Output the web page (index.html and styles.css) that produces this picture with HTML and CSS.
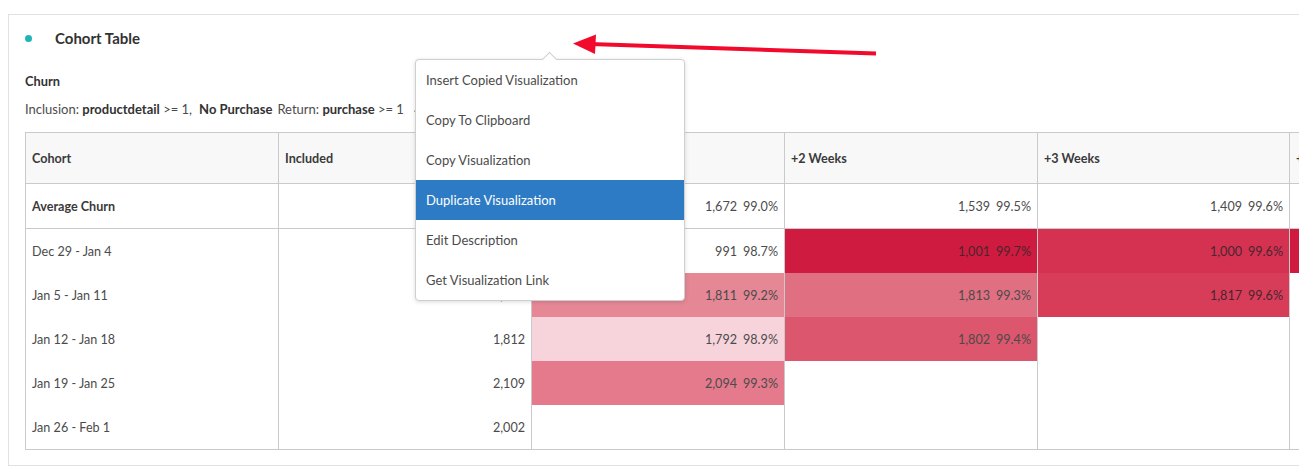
FILE: index.html
```html
<!DOCTYPE html>
<html lang="en">
<head>
<meta charset="utf-8">
<title>Cohort Table</title>
<link rel="stylesheet" href="styles.css">
</head>
<body>
<div class="page">
  <section class="card">
    <header class="card-head">
      <span class="dot"></span>
      <h1 class="card-title">Cohort Table</h1>
    </header>
    <div class="metric">Churn</div>
    <div class="criteria">
      <span>Inclusion: <b>productdetail</b> &gt;= 1,</span>
      <b class="np">No Purchase</b>
      <span>Return: <b>purchase</b> &gt;= 1</span>
      <svg class="pencil" width="8" height="8" viewBox="0 0 8 8"><path d="M1 7 L1.5 5.5 L5.5 1.5 L6.5 2.5 L2.5 6.5 Z" fill="#8a8a8a"/></svg>
    </div>

    <div class="grid">
      <div class="c hd">Cohort</div>
      <div class="c hd">Included</div>
      <div class="c hd">+1 Week</div>
      <div class="c hd">+2 Weeks</div>
      <div class="c hd">+3 Weeks</div>
      <div class="c hd">+4 Weeks</div>

      <div class="c avg lbl">Average Churn</div>
      <div class="c avg num"></div>
      <div class="c avg num"><span>1,672</span><span>99.0%</span></div>
      <div class="c avg num"><span>1,539</span><span>99.5%</span></div>
      <div class="c avg num"><span>1,409</span><span>99.6%</span></div>
      <div class="c avg num"></div>

      <div class="c">Dec 29 - Jan 4</div>
      <div class="c num"><span>991</span></div>
      <div class="c num"><span>991</span><span>98.7%</span></div>
      <div class="c num h1"><span>1,001</span><span>99.7%</span></div>
      <div class="c num h2"><span>1,000</span><span>99.6%</span></div>
      <div class="c num h1"></div>

      <div class="c">Jan 5 - Jan 11</div>
      <div class="c num"><span>1,816</span></div>
      <div class="c num h5"><span>1,811</span><span>99.2%</span></div>
      <div class="c num h4"><span>1,813</span><span>99.3%</span></div>
      <div class="c num h3"><span>1,817</span><span>99.6%</span></div>
      <div class="c"></div>

      <div class="c">Jan 12 - Jan 18</div>
      <div class="c num"><span>1,812</span></div>
      <div class="c num h7"><span>1,792</span><span>98.9%</span></div>
      <div class="c num h6"><span>1,802</span><span>99.4%</span></div>
      <div class="c"></div>
      <div class="c"></div>

      <div class="c">Jan 19 - Jan 25</div>
      <div class="c num"><span>2,109</span></div>
      <div class="c num h8"><span>2,094</span><span>99.3%</span></div>
      <div class="c"></div>
      <div class="c"></div>
      <div class="c"></div>

      <div class="c">Jan 26 - Feb 1</div>
      <div class="c num"><span>2,002</span></div>
      <div class="c"></div>
      <div class="c"></div>
      <div class="c"></div>
      <div class="c"></div>
    </div>
  </section>

  <ul class="menu">
    <li class="item">Insert Copied Visualization</li>
    <li class="item">Copy To Clipboard</li>
    <li class="item">Copy Visualization</li>
    <li class="item active">Duplicate Visualization</li>
    <li class="item">Edit Description</li>
    <li class="item">Get Visualization Link</li>
  </ul>

  <svg class="arrow" width="1299" height="473" viewBox="0 0 1299 473">
    <line x1="876" y1="53.5" x2="590" y2="44" stroke="#f20a2d" stroke-width="4"/>
    <polygon points="573,43.5 596,34.5 595,54" fill="#f20a2d"/>
  </svg>
</div>
</body>
</html>
```

FILE: styles.css
```css
* { box-sizing: border-box; }
html, body { margin: 0; padding: 0; background: #fff; }
body {
  width: 1299px;
  height: 473px;
  overflow: hidden;
  font-family: Lato, "Open Sans", "Liberation Sans", sans-serif;
  color: #4b4b4b;
}
.page { position: relative; width: 1299px; height: 473px; overflow: hidden; }

.card {
  margin: 14px 0 0 8px;
  width: 1700px;
  border: 1px solid #e1e1e1;
  border-right: none;
  padding: 0 0 15px 16px;
}
.card-head {
  display: flex;
  align-items: center;
  height: 46px;
}
.dot {
  width: 7px;
  height: 7px;
  border-radius: 50%;
  background: #1fb5b8;
}
.card-title {
  margin: 0 0 0 23px;
  font-size: 15px;
  font-weight: 700;
  color: #323232;
}
.metric {
  margin-top: 12px;
  line-height: 16px;
  font-size: 12.8px;
  font-weight: 700;
  color: #323232;
}
.criteria {
  margin-top: 12px;
  line-height: 16px;
  font-size: 13px;
  color: #4b4b4b;
  display: flex;
  align-items: center;
  gap: 5px;
}
.criteria b { color: #323232; }
.np { margin-left: 2px; }
.pencil { margin-left: 4px; }

.grid {
  margin-top: 15px;
  display: grid;
  grid-template-columns: 253px 253px 253px 253px 252px 253px;
  grid-template-rows: 51px 45px repeat(5, 44px);
  border-top: 1px solid #cacaca;
  border-left: 1px solid #cacaca;
  border-bottom: 1px solid #cacaca;
  width: max-content;
  font-size: 12.6px;
}
.c {
  border-right: 1px solid #cacaca;
  display: flex;
  align-items: center;
  padding: 0 6px;
  white-space: nowrap;
}
.hd {
  background: #f8f8f8;
  border-bottom: 1px solid #cacaca;
  font-weight: 700;
  color: #3a3a3a;
}
.avg { border-bottom: 1px solid #cacaca; }
.lbl { font-weight: 700; color: #3a3a3a; }
.num { justify-content: flex-end; gap: 6px; }

.h1 { background: #cf1b3f; color: #4a2530; }
.h2 { background: #d43250; color: #4a2530; }
.h3 { background: #d73c59; color: #4a2530; }
.h4 { background: #df6f81; }
.h5 { background: #e68796; }
.h6 { background: #dc566d; }
.h7 { background: #f7d4db; }
.h8 { background: #e47a8c; }

.menu {
  position: absolute;
  left: 415px;
  top: 59px;
  width: 270px;
  margin: 0;
  padding: 0;
  list-style: none;
  background: #fff;
  border: 1px solid #cfcfcf;
  border-radius: 4px;
  box-shadow: 0 1px 4px rgba(0,0,0,0.15);
  font-size: 13px;
}
.menu::before {
  content: "";
  position: absolute;
  left: 128px;
  top: -6px;
  width: 10px;
  height: 10px;
  background: #fff;
  border-top: 1px solid #cfcfcf;
  border-left: 1px solid #cfcfcf;
  transform: rotate(45deg);
}
.item {
  position: relative;
  height: 40px;
  display: flex;
  align-items: center;
  padding-left: 10px;
  color: #4b4b4b;
}
.item.active { background: #2d7bc5; color: #fff; }
.item:first-child { border-radius: 4px 4px 0 0; }

.arrow { position: absolute; left: 0; top: 0; pointer-events: none; }
```
